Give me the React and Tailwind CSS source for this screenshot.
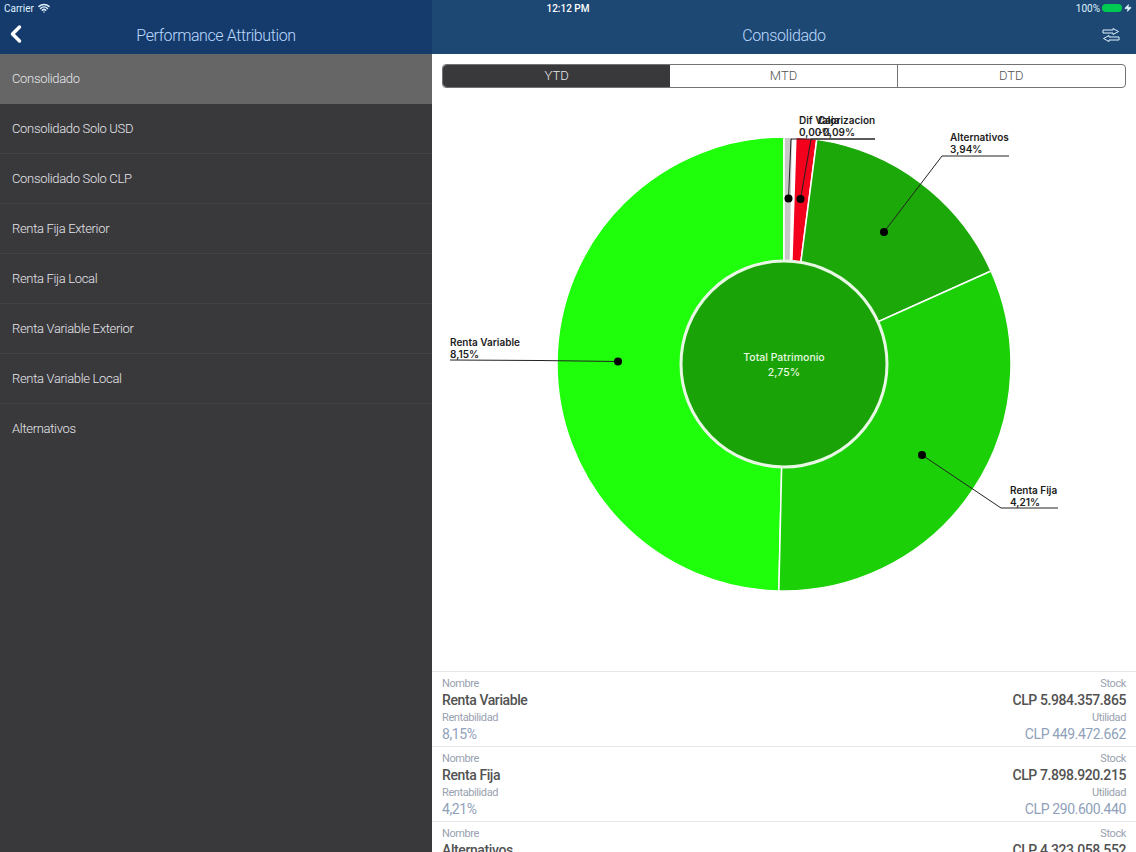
import React from 'react';
import { ChevronLeft, Wifi, Zap } from 'lucide-react';

const menuItems = [
  'Consolidado',
  'Consolidado Solo USD',
  'Consolidado Solo CLP',
  'Renta Fija Exterior',
  'Renta Fija Local',
  'Renta Variable Exterior',
  'Renta Variable Local',
  'Alternativos',
];

const rows = [
  { name: 'Renta Variable', stock: 'CLP 5.984.357.865', rent: '8,15%', util: 'CLP 449.472.662' },
  { name: 'Renta Fija', stock: 'CLP 7.898.920.215', rent: '4,21%', util: 'CLP 290.600.440' },
  { name: 'Alternativos', stock: 'CLP 4.323.058.552', rent: '3,94%', util: 'CLP 170.328.000' },
];

const CX = 784;
const CY = 364;
const R_OUT = 227;
const R_IN = 103;

const polar = (r, deg) => {
  const a = (deg * Math.PI) / 180;
  return [CX + r * Math.sin(a), CY - r * Math.cos(a)];
};

// the thin slices are not true wedges in the picture, so inner angles can differ
const slicePath = (from, to, fromIn = from, toIn = to) => {
  const [x1, y1] = polar(R_OUT, from);
  const [x2, y2] = polar(R_OUT, to);
  const [x3, y3] = polar(R_IN, toIn);
  const [x4, y4] = polar(R_IN, fromIn);
  const large = to - from > 180 ? 1 : 0;
  return `M${x1} ${y1}A${R_OUT} ${R_OUT} 0 ${large} 1 ${x2} ${y2}L${x3} ${y3}A${R_IN} ${R_IN} 0 ${large} 0 ${x4} ${y4}Z`;
};

const slices = [
  { from: 181.3, to: 360, color: '#1ffe0b' },
  { from: 0, to: 2.2, toIn: 3.6, color: '#c8c8c8' },
  { from: 3, to: 8.3, fromIn: 4.4, toIn: 9.4, color: '#f2001c' },
  { from: 8.3, to: 65.8, fromIn: 9.4, color: '#1ba808' },
  { from: 65.8, to: 181.3, color: '#1cd008' },
];

const callouts = [
  { points: '618,361.5 540,360.5 450,360', dot: [618, 361.5], x: 450, y: 346, label: 'Renta Variable', value: '8,15%' },
  { points: '922,455 1001,508 1058,508', dot: [922, 455], x: 1010, y: 494, label: 'Renta Fija', value: '4,21%' },
  { points: '884,232 942,156 1009,156', dot: [884, 232], x: 950, y: 141, label: 'Alternativos', value: '3,94%' },
  { points: '788.5,198.5 791,139 875,139', dot: [788.5, 198.5], x: 799, y: 124, label: 'Dif Valorizacion', value: '0,00%' },
  { points: '800.5,199 811,139 875,139', dot: [800.5, 199], x: 818, y: 124, label: 'Caja', value: '-0,09%' },
];

const PieChart = () => (
  <svg viewBox="432 88 704 583" className="w-full h-[583px]">
    {slices.map((s) => (
      <path key={s.from} d={slicePath(s.from, s.to, s.fromIn, s.toIn)} fill={s.color} stroke="#ffffff" strokeWidth="1.5" />
    ))}
    <circle cx={CX} cy={CY} r={R_IN} fill="#1aa306" stroke="#e8f8e4" strokeWidth="3" />
    <text x={CX} y={361} textAnchor="middle" fill="#e6f8e0" fontSize="10.5" fontWeight="500" fontFamily="Inter, sans-serif">
      Total Patrimonio
    </text>
    <text x={CX} y={376} textAnchor="middle" fill="#e6f8e0" fontSize="10.5" fontWeight="500" fontFamily="Inter, sans-serif">
      2,75%
    </text>
    {callouts.map((c) => (
      <g key={c.label}>
        <polyline points={c.points} fill="none" stroke="#222222" strokeWidth="1" />
        <circle cx={c.dot[0]} cy={c.dot[1]} r="4" fill="#000000" />
        <text x={c.x} y={c.y} fill="#1c1c1c" fontSize="10" fontWeight="600" fontFamily="Inter, sans-serif">
          {c.label}
        </text>
        <text x={c.x} y={c.y + 12} fill="#1c1c1c" fontSize="10" fontWeight="600" fontFamily="Inter, sans-serif">
          {c.value}
        </text>
      </g>
    ))}
  </svg>
);

const SwapIcon = () => (
  <svg viewBox="0 0 18 14" className="w-4.5 h-3.5 text-sky-100" fill="none" stroke="currentColor" strokeWidth="1">
    <path d="M1 2h10V0.5L16.5 3.5 11 6.5V5H1z" />
    <path d="M17 9H7V7.5L1.5 10.5 7 13.5V12H17z" />
  </svg>
);

const DataRow = ({ row }) => (
  <div className="h-[75px] shrink-0 border-t border-gray-200 px-2.5 pt-1 flex justify-between tracking-tight">
    <div>
      <p className="text-[11px] leading-4 text-gray-400">Nombre</p>
      <p className="text-sm leading-4 font-medium text-neutral-600">{row.name}</p>
      <p className="mt-0.5 text-[11px] leading-4 text-gray-400">Rentabilidad</p>
      <p className="text-sm leading-4 text-slate-400">{row.rent}</p>
    </div>
    <div className="text-right">
      <p className="text-[11px] leading-4 text-gray-400">Stock</p>
      <p className="text-sm leading-4 font-medium text-neutral-600">{row.stock}</p>
      <p className="mt-0.5 text-[11px] leading-4 text-gray-400">Utilidad</p>
      <p className="text-sm leading-4 text-slate-400">{row.util}</p>
    </div>
  </div>
);

export default function App() {
  return (
    <div className="relative h-screen overflow-hidden flex bg-white font-['Roboto',sans-serif]">
      {/* status bar sits over both headers */}
      <div className="absolute z-10 inset-x-0 top-0 h-4 px-1 grid grid-cols-3 items-center text-[10px] text-sky-100">
        <div className="flex items-center gap-1">
          Carrier
          <Wifi className="w-3 h-3" strokeWidth={3} />
        </div>
        <div className="text-center font-medium text-white">12:12 PM</div>
        <div className="flex items-center justify-end gap-0.5">
          100%
          <span className="w-5 h-2 rounded-sm bg-green-500" />
          <Zap className="w-2 h-2 fill-current" />
        </div>
      </div>

      <aside className="w-[432px] shrink-0 bg-[#39383b]">
        <header className="relative bg-[#153a6c] pt-5.5 pb-1 text-center text-base leading-7 font-light tracking-tight text-blue-200">
          <ChevronLeft className="absolute left-0.5 top-5 w-7 h-7 text-white" strokeWidth={3} />
          Performance Attribution
        </header>
        <nav>
          {menuItems.map((item, i) => (
            <div
              key={item}
              className={`h-[50px] flex items-center px-3 text-[13px] font-light tracking-tight text-gray-200 ${
                i === 0 ? 'bg-[#666666]' : 'border-b border-white/5 last:border-b-0'
              }`}
            >
              {item}
            </div>
          ))}
        </nav>
      </aside>

      <main className="flex-1 min-w-0">
        <header className="relative bg-[#1e4874] pt-5.5 pb-1 text-center text-base leading-7 font-light tracking-tight text-blue-200">
          Consolidado
          <div className="absolute right-4 top-7">
            <SwapIcon />
          </div>
        </header>
        <div className="mx-2.5 mt-2.5 h-6 grid grid-cols-3 border border-neutral-500 rounded text-[13px] font-light text-neutral-600">
          <div className="flex items-center justify-center bg-[#39383b] text-gray-200 rounded-l">YTD</div>
          <div className="flex items-center justify-center border-r border-neutral-500">MTD</div>
          <div className="flex items-center justify-center">DTD</div>
        </div>
        <PieChart />
        <div>
          {rows.map((row) => (
            <DataRow key={row.name} row={row} />
          ))}
        </div>
      </main>
    </div>
  );
}
